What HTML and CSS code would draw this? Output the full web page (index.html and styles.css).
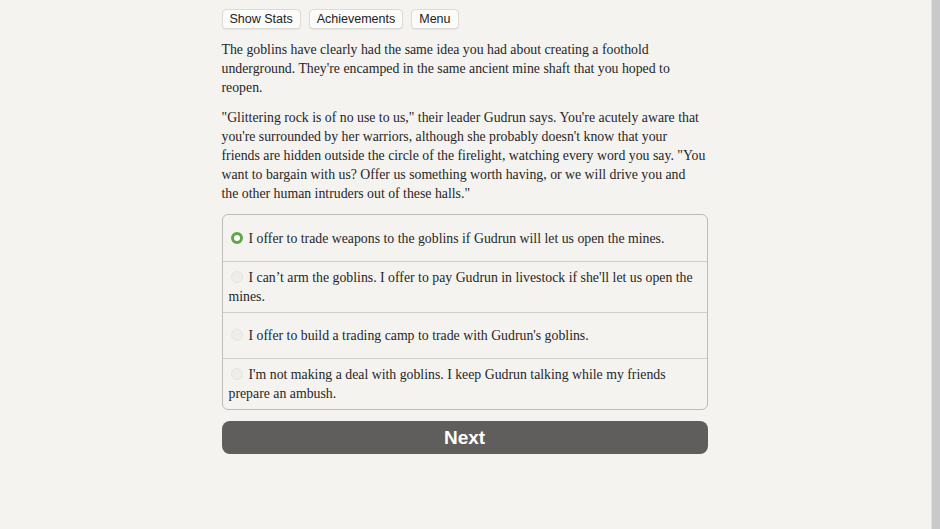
FILE: index.html
```html
<!DOCTYPE html>
<html>
<head>
<meta charset="utf-8">
<link rel="stylesheet" href="styles.css">
</head>
<body>
<div class="page">
  <main class="main">
    <div class="container">
      <div class="buttons">
        <button class="topbtn">Show Stats</button>
        <button class="topbtn">Achievements</button>
        <button class="topbtn">Menu</button>
      </div>
      <p class="para">The goblins have clearly had the same idea you had about creating a foothold underground. They're encamped in the same ancient mine shaft that you hoped to reopen.</p>
      <p class="para">"Glittering rock is of no use to us," their leader Gudrun says. You're acutely aware that you're surrounded by her warriors, although she probably doesn't know that your friends are hidden outside the circle of the firelight, watching every word you say. "You want to bargain with us? Offer us something worth having, or we will drive you and the&nbsp;other human intruders out of these halls."</p>
      <div class="choices">
        <label class="choice"><span class="txt"><span class="radio selected"></span>I offer to trade weapons to the goblins if Gudrun will let us open the mines.</span></label>
        <label class="choice"><span class="txt"><span class="radio"></span>I can’t arm the goblins. I offer to pay Gudrun in livestock if she'll let us open the mines.</span></label>
        <label class="choice"><span class="txt"><span class="radio"></span>I offer to build a trading camp to trade with Gudrun's goblins.</span></label>
        <label class="choice"><span class="txt"><span class="radio"></span>I'm not making a deal with goblins. I keep Gudrun talking while my friends prepare an ambush.</span></label>
      </div>
      <button class="next">Next</button>
    </div>
  </main>
  <div class="scrollbar"></div>
</div>
</body>
</html>
```
FILE: styles.css
```css
html, body {
  margin: 0;
  padding: 0;
  height: 100%;
}
body {
  background: #f4f3f0;
  font-family: "Liberation Serif", "DejaVu Serif", serif;
  color: #262626;
}
.page {
  display: flex;
  height: 529px;
  overflow: hidden;
}
.main {
  flex: 1;
  display: flex;
  justify-content: center;
  padding-right: 2px;
}
.container {
  width: 486px;
  padding-top: 9px;
}
.buttons {
  display: flex;
  gap: 8px;
  margin-bottom: 11px;
}
.topbtn {
  font-family: "Liberation Sans", Arial, sans-serif;
  font-size: 12.5px;
  color: #222;
  background: #fbfbfa;
  border: 1px solid #dcdbd8;
  border-radius: 4px;
  height: 20px;
  padding: 0 7px;
  line-height: 18px;
  box-shadow: 0 1px 1px rgba(0,0,0,0.06);
}
.para {
  font-size: 13.8px;
  line-height: 19px;
  margin: 0 0 11px;
}
.choices {
  margin-top: 11px;
  border: 1px solid #bdbcba;
  border-radius: 6px;
  overflow: hidden;
}
.choice {
  display: flex;
  align-items: center;
  min-height: 46px;
  box-sizing: border-box;
  padding: 6px 6px;
  border-top: 1px solid #cfcecc;
  font-size: 13.8px;
  line-height: 19px;
}
.choice:first-child {
  border-top: none;
}
.radio {
  display: inline-block;
  width: 12px;
  height: 12px;
  border-radius: 50%;
  background: #eeede9;
  border: 1px solid #e6e5e2;
  box-sizing: border-box;
  margin: 0 6px 0 2px;
  vertical-align: -1px;
}
.radio.selected {
  background: #fff;
  border: 3px solid #5fa648;
}
.next {
  display: block;
  width: 100%;
  margin-top: 11px;
  height: 33px;
  border: none;
  border-radius: 8px;
  background: #5f5e5c;
  color: #fff;
  font-family: "Liberation Sans", Arial, sans-serif;
  font-weight: bold;
  font-size: 19px;
}
.scrollbar {
  width: 8px;
  flex: none;
  background: #c9c9cb;
  border-left: 1px solid #e1e1e1;
}
```
